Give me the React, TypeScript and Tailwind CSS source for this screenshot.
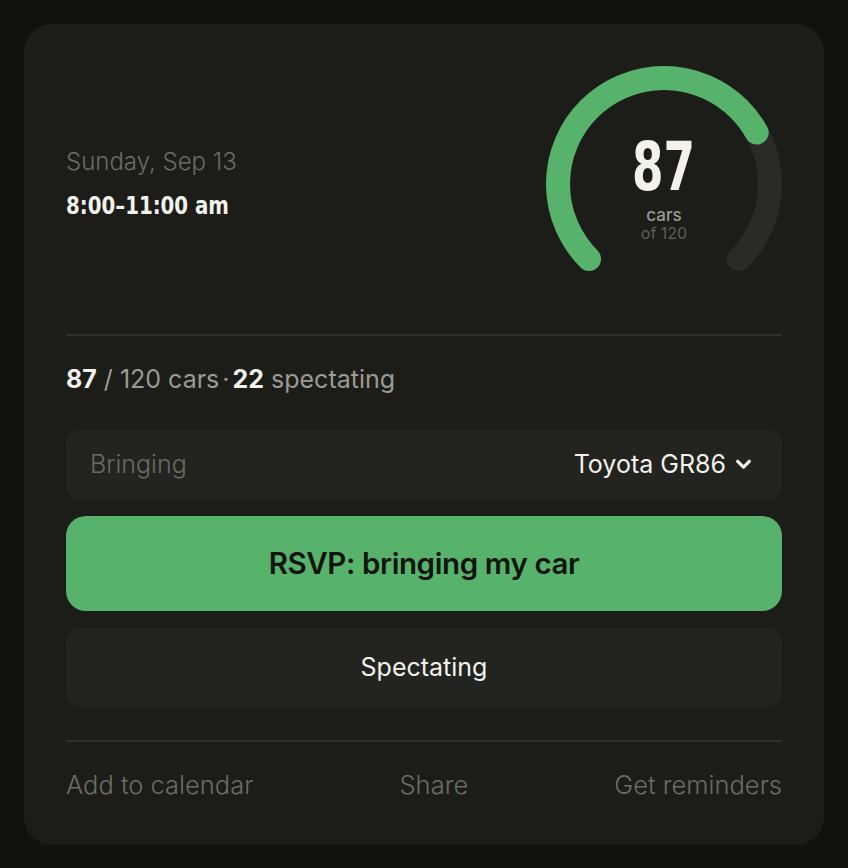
import React from "react"

const GREEN = "#57b36b"

function Gauge({ value, max }: { value: number; max: number }) {
  const r = 106
  const c = 2 * Math.PI * r
  const track = c * 0.75
  const progress = track * (value / max)
  return (
    <div className="relative w-[236px] h-[236px] shrink-0">
      <svg width="236" height="236" viewBox="0 0 236 236">
        <circle
          cx="118"
          cy="118"
          r={r}
          fill="none"
          stroke="#2a2a27"
          strokeWidth="24"
          strokeLinecap="round"
          strokeDasharray={`${track} ${c}`}
          transform="rotate(135 118 118)"
        />
        <circle
          cx="118"
          cy="118"
          r={r}
          fill="none"
          stroke={GREEN}
          strokeWidth="24"
          strokeLinecap="round"
          strokeDasharray={`${progress} ${c}`}
          transform="rotate(135 118 118)"
        />
      </svg>
      <div className="absolute inset-0 flex flex-col items-center pt-[68px]">
        <div className="inline-block scale-x-[0.74] text-[68px] leading-[66px] font-bold text-[#f2f1ec] [font-family:'DejaVu_Sans_Condensed',sans-serif]">
          {value}
        </div>
        <div className="mt-[5px] text-[17px] leading-[20px] font-medium text-[#9b9a94]">cars</div>
        <div className="text-[16px] leading-[17px] text-[#5f5e59]">of {max}</div>
      </div>
    </div>
  )
}

export default function App() {
  return (
    <div className="min-h-screen bg-[#111110] p-[24px] [font-family:Inter,'Noto_Sans',sans-serif]">
      <div className="w-[800px] rounded-[28px] bg-[#1c1c19] px-[42px] pt-[42px] pb-[44px]">
        {/* header */}
        <div className="flex items-center justify-between">
          <div className="flex flex-col">
            <div className="text-[24px] leading-[30px] font-light text-[#6c6b66]">Sunday, Sep 13</div>
            <div className="mt-[13px] inline-block origin-left scale-x-[0.88] text-[25px] leading-[32px] font-bold text-[#f2f1ec] [font-family:'DejaVu_Sans_Condensed',sans-serif]">
              8:00–11:00 am
            </div>
          </div>
          <Gauge value={87} max={120} />
        </div>

        <div className="mt-[32px] h-[2px] bg-[#2f2f2b]" />

        <div className="mt-[28px] text-[25px] leading-[30px] text-[#9b9a94]">
          <span className="font-bold text-[#f2f1ec]">87</span> / 120 cars
          <span className="mx-[3px]">·</span>
          <span className="font-bold text-[#f2f1ec]">22</span> spectating
        </div>

        {/* select */}
        <div className="mt-[36px] h-[69px] rounded-[14px] bg-[#23231f] flex items-center justify-between pl-[24px] pr-[30px]">
          <span className="text-[25px] font-light text-[#6c6b66]">Bringing</span>
          <span className="flex items-center gap-[9px] text-[25px] text-[#f2f1ec]">
            Toyota GR86
            <svg width="17" height="17" viewBox="0 0 16 16" fill="none">
              <path d="M2.5 5 8 10.5 13.5 5" stroke="#f2f1ec" strokeWidth="3" strokeLinecap="round" strokeLinejoin="round" />
            </svg>
          </span>
        </div>

        <button className="mt-[17px] w-full h-[95px] rounded-[20px] bg-[#57b36b] text-[29.5px] font-semibold text-[#12140f] tracking-[-0.4px]">
          RSVP: bringing my car
        </button>

        <button className="mt-[17px] w-full h-[79px] rounded-[16px] bg-[#23231f] text-[25px] text-[#f2f1ec]">
          Spectating
        </button>

        <div className="mt-[33px] h-[2px] bg-[#2f2f2b]" />

        <div className="mt-[27px] flex justify-between text-[25.5px] leading-[32px] font-light text-[#6c6b66]">
          <span>Add to calendar</span>
          <span>Share</span>
          <span>Get reminders</span>
        </div>
      </div>
    </div>
  )
}
